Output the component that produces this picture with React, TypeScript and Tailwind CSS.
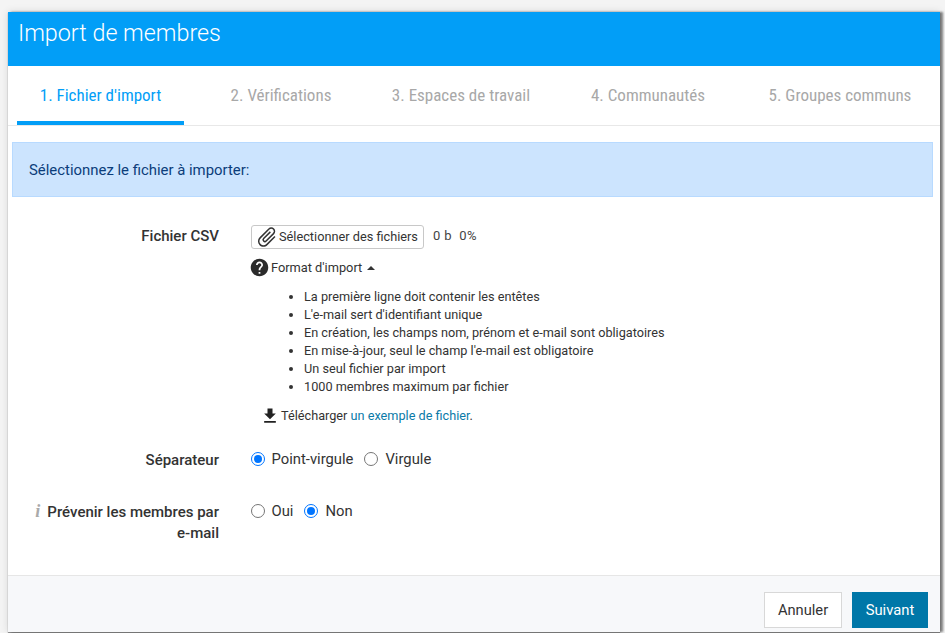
import { MdAttachFile, MdFileDownload, MdHelp } from 'react-icons/md'

const tabs = [
  { label: "1. Fichier d'import", className: 'w-[167px] text-[#029ef7] border-[#029ef7]' },
  { label: '2. Vérifications', className: 'w-[146px] ml-[24px] text-[#a8a8a8] border-transparent' },
  { label: '3. Espaces de travail', className: 'w-[184px] ml-[15px] text-[#a8a8a8] border-transparent' },
  { label: '4. Communautés', className: 'w-[160px] ml-[15px] text-[#a8a8a8] border-transparent' },
  { label: '5. Groupes communs', className: 'w-[188px] ml-[18px] text-[#a8a8a8] border-transparent' },
]

const rules = [
  'La première ligne doit contenir les entêtes',
  "L'e-mail sert d'identifiant unique",
  'En création, les champs nom, prénom et e-mail sont obligatoires',
  "En mise-à-jour, seul le champ l'e-mail est obligatoire",
  'Un seul fichier par import',
  '1000 membres maximum par fichier',
]

function Radio({ checked, label }: { checked?: boolean; label: string }) {
  return (
    <label className="flex items-center gap-[7px]">
      {checked ? (
        <span className="w-[14px] h-[14px] rounded-full border-[1.5px] border-[#0075ff] flex items-center justify-center">
          <span className="w-[8px] h-[8px] rounded-full bg-[#0075ff]" />
        </span>
      ) : (
        <span className="w-[14px] h-[14px] rounded-full border border-[#767676] bg-white" />
      )}
      <span>{label}</span>
    </label>
  )
}

export default function App() {
  return (
    <div className="h-[633px] overflow-hidden bg-[#f4f4f4] pl-[8px] pr-[5px] pt-[12px] font-['Roboto',sans-serif] text-[#333333]">
      <div className="h-[620px] flex flex-col bg-white shadow-[0_0_8px_rgba(0,0,0,0.12),3px_0_2px_rgba(0,0,0,0.45),0_1px_1px_rgba(0,0,0,0.4)]">
        {/* Titre */}
        <div className="h-[54px] shrink-0 bg-[#029ef7] pl-[10px] pt-[4px] text-[23.3px] leading-[34px] font-light text-white">
          Import de membres
        </div>

        {/* Etapes */}
        <div className="h-[60px] shrink-0 flex pl-[9px] border-b border-[#e8e8e8]">
          {tabs.map((tab) => (
            <div
              key={tab.label}
              className={`h-[59px] border-b-4 pt-[17px] text-center text-[17px] leading-[24px] whitespace-nowrap [font-stretch:75%] ${tab.className}`}
            >
              {tab.label}
            </div>
          ))}
        </div>

        {/* Contenu */}
        <div className="flex-1 pl-[4px] pr-[7px] pt-[16px]">
          <div className="h-[55px] bg-[#cce4fe] border border-[#b8daff] pl-[16px] pt-[1px] flex items-center text-[14.9px] text-[#0b3d7a]">
            Sélectionnez le fichier à importer:
          </div>

          <div className="mt-[28px] flex">
            <div className="w-[207px] shrink-0 pt-[1px] text-right text-[15px] leading-[20px] font-medium">Fichier CSV</div>
            <div className="ml-[32px] text-[12.8px]">
              <div className="flex items-center">
                <button className="h-[24px] w-[173px] flex items-center border border-[#c8c8c8] rounded-[3px] pl-[3px] text-[12.75px] text-[#333333]">
                  <MdAttachFile size={24} className="shrink-0 rotate-45" />
                  <span className="whitespace-nowrap">Sélectionner des fichiers</span>
                </button>
                <span className="ml-[9px] mb-[2px] text-[13px] tracking-[0.4px] text-[#444444]">0 b&nbsp; 0%</span>
              </div>

              <div className="mt-[8px] flex items-center h-[21px]">
                <MdHelp size={21} className="-ml-[2px] -mr-[1px] text-[#2b2b2b]" />
                <span className="ml-[2px]">Format d'import</span>
                <span className="ml-[5px] w-0 h-0 border-x-[4px] border-x-transparent border-b-[4px] border-b-[#333333]" />
              </div>

              <ul className="mt-[10px] ml-[53px] list-disc pl-0 text-[12.7px] leading-[18px]">
                {rules.map((rule) => (
                  <li key={rule} className="whitespace-nowrap">{rule}</li>
                ))}
              </ul>

              <div className="mt-[10px] ml-[9px] flex items-center h-[20px]">
                <MdFileDownload size={20} className="text-[#222222]" />
                <span className="ml-[1px] text-[12.7px]">
                  Télécharger <span className="text-[#0a7aa8]">un exemple de fichier</span>.
                </span>
              </div>
            </div>
          </div>

          <div className="mt-[23px] flex items-start">
            <div className="w-[207px] shrink-0 text-right text-[15px] leading-[22px] font-medium">Séparateur</div>
            <div className="ml-[31.5px] -mt-[1px] flex gap-[11px] text-[14.8px] leading-[22px]">
              <Radio checked label="Point-virgule" />
              <Radio label="Virgule" />
            </div>
          </div>

          <div className="mt-[30px] flex items-start">
            <div className="w-[207px] shrink-0 text-right text-[15px] leading-[21px] font-medium">
              <span className="mr-[7px] font-['Liberation_Serif',serif] font-bold italic text-[18px] leading-[21px] text-[#aaaaaa]">i</span>
              Prévenir les membres par
              <br />
              e-mail
            </div>
            <div className="ml-[31.5px] -mt-[1px] flex gap-[11px] text-[14.8px] leading-[22px]">
              <Radio label="Oui" />
              <Radio checked label="Non" />
            </div>
          </div>
        </div>

        {/* Pied */}
        <div className="h-[57px] shrink-0 bg-[#f7f8fa] border-t border-[#e6e6e6] flex items-start justify-end gap-[10px] pt-[16px] pr-[12px]">
          <button className="w-[78px] h-[36px] bg-white border border-[#d8d8d8] text-[14.7px] text-[#333333]">Annuler</button>
          <button className="w-[76px] h-[36px] bg-[#0077a8] text-[14.8px] text-white">Suivant</button>
        </div>
      </div>
    </div>
  )
}
